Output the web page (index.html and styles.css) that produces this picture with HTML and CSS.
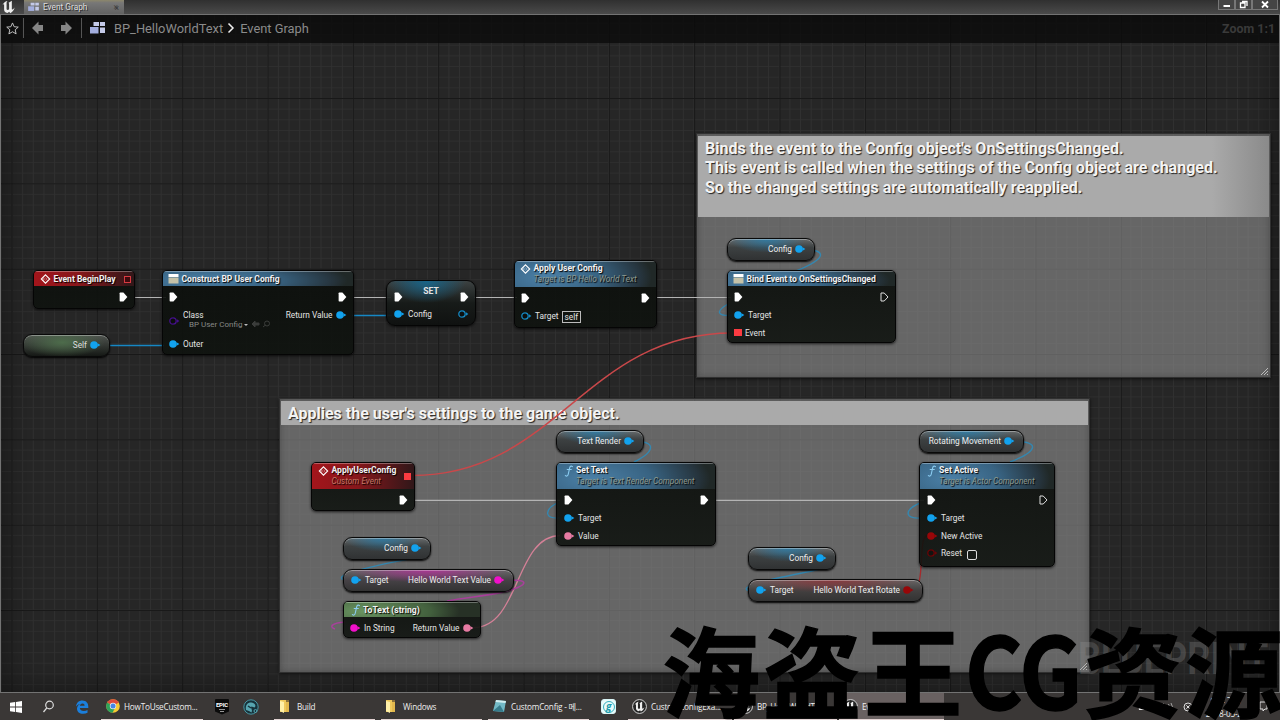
FILE: index.html
```html
<!DOCTYPE html>
<html lang="en">
<head>
  <meta charset="UTF-8">
  <meta name="viewport" content="width=device-width, initial-scale=1.0">
  <title>Event Graph</title>
  <link rel="stylesheet" href="styles.css">
</head>
<body>
  <!-- Shared pin shapes and icons -->
  <svg class="defs" width="0" height="0">
    <symbol id="exec" viewBox="0 0 9 10"><path d="M.6 1.2Q.6.5 1.3.5H4.4L8.4 5 4.4 9.5H1.3Q.6 9.5.6 8.8Z" fill="#fff"/></symbol>
    <symbol id="exec-off" viewBox="0 0 9 10"><path d="M1 1H4.2L8 5 4.2 9H1Z" fill="none" stroke="#ddd"/></symbol>
    <symbol id="dot" viewBox="0 0 11 8"><circle cx="4" cy="4" r="3.8" fill="currentColor"/><path d="M7.500 2.300 10.400 4 7.500 5.700Z" fill="currentColor"/></symbol>
    <symbol id="ring" viewBox="0 0 11 8"><circle cx="4" cy="4" r="3.2" fill="#0004" stroke="currentColor" stroke-width="1.3"/><path d="M8 2.3 10.4 4 8 5.7Z" fill="currentColor"/></symbol>
    <symbol id="event" viewBox="0 0 10 10"><path d="M5 .8 9.2 5 5 9.2.8 5Z" fill="none" stroke="#fff" stroke-width="1.1"/><path d="M3.2 3.6V6.4M3.2 5H5M5 3.5 6.6 5 5 6.5" fill="none" stroke="#fff" stroke-width=".6" opacity=".6"/></symbol>
    <symbol id="box" viewBox="0 0 11 10"><path d="M.5 0H10.5V3H.5Z" fill="#fff"/><path d="M.5 3.6H10.5V9.5H.5Z" fill="#c5c2a8"/></symbol>
    <symbol id="func" viewBox="0 0 9 12"><path d="M8 1.6C6.4.4 5.5 1.5 5.1 3.2L3.8 9C3.4 10.8 2.4 11.7.9 10.6M2.7 4.5H6.8" fill="none" stroke="currentColor" stroke-width="1.1" stroke-linecap="round"/></symbol>
    <symbol id="graph" viewBox="0 0 17 14"><path d="M4.500 1H10V5H4.500ZM11 1H16V5H11ZM11 6.500H16V12H11Z" fill="#c4cae8"/><path d="M1 6H9.500V12.500H1Z" fill="#a3aede"/></symbol>
    <symbol id="unreal" viewBox="0 0 16 16"><path d="M1 6C3 2.5 4.8 1.5 7 1.2 5.8 2 5.8 3 5.8 4V10.5C6.4 11.6 7.7 11.7 8.7 10.6V4.5C8.7 3.6 8.2 3.3 7.8 3.3L11.8.8V10.5C12.5 11.3 13.6 10.6 15 8.6 14.3 12 12.2 14 10 15L8.8 13.5 6.8 14.8C4 14 3 12.6 3 11V5.5C3 4.5 2.1 4.9 1 6Z" fill="#eee"/></symbol>
    <symbol id="folder" viewBox="0 0 12 14"><path d="M1 1H7V3H10V13H1Z" fill="#efc95c"/><path d="M1 2 5 3V14L1 12Z" fill="#fff0a8"/><path d="M7 1H10V13H7Z" fill="#d5a83d" opacity=".5"/></symbol>
    <symbol id="grip" viewBox="0 0 9 9"><path d="M1 8 8 1M4 8 8 4M7 8 8 7" stroke="#bbb" stroke-width="1"/></symbol>
  </svg>

  <header class="titlebar">
    <svg class="logo"><use href="#unreal"/></svg>
    <div class="tab">
      <svg class="tab-icon"><use href="#graph"/></svg>
      <span>Event Graph</span>
      <span class="tab-close">×</span>
    </div>
    <div class="window-buttons">
      <span><svg width="10" height="9"><path d="M1.500 6H8" stroke="#fff" stroke-width="2"/></svg></span>
      <span><svg width="10" height="9"><path d="M1.500 3H6V7.500H1.500ZM3 1.500H8V6" fill="none" stroke="#fff" stroke-width="1.300"/></svg></span>
      <span class="close"><svg width="10" height="9"><path d="M2 1.500 8 7.500M8 1.500 2 7.500" stroke="#fff" stroke-width="1.800"/></svg></span>
    </div>
  </header>

  <main class="graph">
    <nav class="breadcrumb">
      <svg class="star" viewBox="0 0 14 14"><path d="M7 1 8.800 5.100 13.200 5.500 9.900 8.400 10.900 12.800 7 10.500 3.100 12.800 4.100 8.400.8 5.500 5.200 5.100Z" fill="none" stroke="#ccc"/></svg>
      <i class="sep"></i>
      <svg class="arrow" viewBox="0 0 12 14"><path d="M0 7 6.500.5V4H11V10H6.500V13.500Z" fill="#858585"/></svg>
      <svg class="arrow" viewBox="0 0 12 14"><path d="M12 7 5.500.5V4H1V10H5.500V13.500Z" fill="#858585"/></svg>
      <i class="sep"></i>
      <svg class="crumb-icon"><use href="#graph"/></svg>
      <span>BP_HelloWorldText</span>
      <svg class="chevron" viewBox="0 0 8 12"><path d="M1.500 1.500 6 6 1.500 10.500" fill="none" stroke="#eee" stroke-width="1.500"/></svg>
      <span>Event Graph</span>
      <span class="zoom">Zoom 1:1</span>
    </nav>

    <section class="comment comment-bind">
      <h2>Binds the event to the Config object's OnSettingsChanged.<br>This event is called when the settings of the Config object are changed.<br>So the changed settings are automatically reapplied.</h2>
      <svg class="grip"><use href="#grip"/></svg>
    </section>
    <section class="comment comment-apply">
      <h2>Applies the user's settings to the game object.</h2>
      <svg class="grip"><use href="#grip"/></svg>
    </section>
    <div class="blueprint">BLUEPRINT</div>

    <!-- Wires, in window coordinates -->
    <svg class="wires" viewBox="0 0 1280 720">
      <g stroke="#b4b4b4" stroke-width="1.200">
        <path d="M134 297.500H166M353 297.500H391M474 297.500H517M656 297.500H731M414 500.300H560M715 500.300H924"/>
      </g>
      <g stroke="#1687c4" stroke-width="1.400">
        <path d="M104 345.500H164M352 315.500H392"/>
      </g>
      <g stroke="#3487b0" stroke-width="1.400">
        <path d="M805 249.500C826 250 828 258 796 271M728 304C716 311 716 316 732 315.500"/>
        <path d="M634 441.500C656 441 656 451 634 462M557 503C544 510 544 519 560 518"/>
        <path d="M1013 441.500C1040 441 1039 451 1010 462M920 503C904 510 904 519 921 518"/>
        <path d="M421 548C438 551 425 555 408 559 390 563 335 573 342 579L353 580"/>
        <path d="M826 559C842 561 829 567 812 571 794 575 740 584 747 590L758 591"/>
      </g>
      <path d="M412 475.500C557 475.500 585 333 732 333" stroke="#c9484a" stroke-width="1.500"/>
      <path d="M474 627.500C520 627 515 536 560 535.500" stroke="#d48097" stroke-width="1.300"/>
      <path d="M504 580C532 579 528 585 507 591 490 596 465 597 447 601M345 622C331 623 329 627 335 629" stroke="#a8409b" stroke-width="1.500"/>
      <path d="M911 591C927 591 917 538 927 535.500" stroke="#a62a2c" stroke-width="1.300"/>
    </svg>

    <article class="node begin-play">
      <header class="red"><svg class="icon"><use href="#event"/></svg><b>Event BeginPlay</b><i class="delegate hollow"></i></header>
      <div class="row"><span></span><svg class="exec"><use href="#exec"/></svg></div>
    </article>

    <article class="pill self green"><span>Self</span><svg class="pin blue"><use href="#dot"/></svg></article>

    <article class="node construct">
      <header class="blue-head"><svg class="icon"><use href="#box"/></svg><b>Construct BP User Config</b></header>
      <div class="row"><svg class="exec"><use href="#exec"/></svg><svg class="exec"><use href="#exec"/></svg></div>
      <div class="row class-row">
        <svg class="pin purple"><use href="#ring"/></svg>
        <div class="class-pick">
          <span>Class</span>
          <div class="picker"><span>BP User Config <i class="caret"></i></span>
            <svg width="20" height="8"><path d="M1 4 4 1V3H8V5H4V7ZM12 7 14.500 5" fill="#3b3d3b" stroke="#3b3d3b"/><circle cx="16" cy="3.500" r="2.500" fill="none" stroke="#3b3d3b"/></svg>
          </div>
        </div>
        <div class="out"><span>Return Value</span><svg class="pin blue"><use href="#dot"/></svg></div>
      </div>
      <div class="row"><div class="in"><svg class="pin blue"><use href="#dot"/></svg><span>Outer</span></div></div>
    </article>

    <article class="node set-node">
      <b>SET</b>
      <div class="row"><svg class="exec"><use href="#exec"/></svg><svg class="exec"><use href="#exec"/></svg></div>
      <div class="row"><div class="in"><svg class="pin blue"><use href="#dot"/></svg><span>Config</span></div><svg class="pin blue-dim"><use href="#ring"/></svg></div>
    </article>

    <article class="node apply">
      <header class="blue-head tall"><svg class="icon"><use href="#event"/></svg><div><b>Apply User Config</b><em>Target is BP Hello World Text</em></div></header>
      <div class="row"><svg class="exec"><use href="#exec"/></svg><svg class="exec"><use href="#exec"/></svg></div>
      <div class="row"><div class="in"><svg class="pin blue-dim"><use href="#ring"/></svg><span>Target</span><span class="self-box">self</span></div></div>
    </article>

    <article class="pill cfg-bind"><span>Config</span><svg class="pin blue"><use href="#dot"/></svg></article>
    <article class="node bind">
      <header class="blue-head"><svg class="icon"><use href="#box"/></svg><b>Bind Event to OnSettingsChanged</b></header>
      <div class="row"><svg class="exec"><use href="#exec"/></svg><svg class="exec"><use href="#exec-off"/></svg></div>
      <div class="row"><div class="in"><svg class="pin blue"><use href="#dot"/></svg><span>Target</span></div></div>
      <div class="row"><div class="in"><i class="delegate"></i><span>Event</span></div></div>
    </article>

    <article class="node custom-event">
      <header class="red tall"><svg class="icon"><use href="#event"/></svg><div><b>ApplyUserConfig</b><em>Custom Event</em></div><i class="delegate"></i></header>
      <div class="row"><span></span><svg class="exec"><use href="#exec"/></svg></div>
    </article>

    <article class="pill text-render"><span>Text Render</span><svg class="pin blue"><use href="#dot"/></svg></article>
    <article class="node set-text">
      <header class="blue-head tall"><svg class="icon func"><use href="#func"/></svg><div><b>Set Text</b><em>Target is Text Render Component</em></div></header>
      <div class="row"><svg class="exec"><use href="#exec"/></svg><svg class="exec"><use href="#exec"/></svg></div>
      <div class="row"><div class="in"><svg class="pin blue"><use href="#dot"/></svg><span>Target</span></div></div>
      <div class="row"><div class="in"><svg class="pin pink"><use href="#dot"/></svg><span>Value</span></div></div>
    </article>

    <article class="pill cfg-text"><span>Config</span><svg class="pin blue"><use href="#dot"/></svg></article>
    <article class="pill text-value magenta-head">
      <div class="in"><svg class="pin blue"><use href="#dot"/></svg><span>Target</span></div>
      <span>Hello World Text Value</span><svg class="pin magenta"><use href="#dot"/></svg>
    </article>
    <article class="node to-text">
      <header class="green-head"><svg class="icon func"><use href="#func"/></svg><b>ToText (string)</b></header>
      <div class="row"><div class="in"><svg class="pin magenta"><use href="#dot"/></svg><span>In String</span></div><div class="out"><span>Return Value</span><svg class="pin pink"><use href="#dot"/></svg></div></div>
    </article>

    <article class="pill cfg-rotate"><span>Config</span><svg class="pin blue"><use href="#dot"/></svg></article>
    <article class="pill text-rotate red-head">
      <div class="in"><svg class="pin blue"><use href="#dot"/></svg><span>Target</span></div>
      <span>Hello World Text Rotate</span><svg class="pin dark-red"><use href="#dot"/></svg>
    </article>

    <article class="pill rotating"><span>Rotating Movement</span><svg class="pin blue"><use href="#dot"/></svg></article>
    <article class="node set-active">
      <header class="blue-head tall"><svg class="icon func"><use href="#func"/></svg><div><b>Set Active</b><em>Target is Actor Component</em></div></header>
      <div class="row"><svg class="exec"><use href="#exec"/></svg><svg class="exec"><use href="#exec-off"/></svg></div>
      <div class="row"><div class="in"><svg class="pin blue"><use href="#dot"/></svg><span>Target</span></div></div>
      <div class="row"><div class="in"><svg class="pin dark-red"><use href="#dot"/></svg><span>New Active</span></div></div>
      <div class="row"><div class="in"><svg class="pin deep-red"><use href="#ring"/></svg><span>Reset</span><i class="check"></i></div></div>
    </article>
  </main>

  <footer class="taskbar">
    <div class="task start"><svg width="12" height="12"><path d="M0 1.800 5.200 1V5.600H0ZM6 .9 12 0V5.600H6ZM0 6.400H5.200V11L0 10.200ZM6 6.400H12V12L6 11.100Z" fill="#fff"/></svg></div>
    <div class="task search"><svg width="13" height="13"><circle cx="7.500" cy="5" r="3.800" fill="none" stroke="#ddd" stroke-width="1.200"/><path d="M4.800 7.800 1.500 12" stroke="#ddd" stroke-width="1.300"/></svg></div>
    <div class="task edge"><svg width="14" height="14"><path d="M1 6.500C1.500 2.500 4 .5 7.300.5 11.500.5 13.300 3.500 13.300 6.500V8H4.800C5 10 6.500 11 8.800 11 10.300 11 11.500 10.600 12.500 10V12.800C11.300 13.500 9.800 13.800 8 13.800 4.500 13.800 2 11.800 2 8.800 2 6.500 3.300 4.900 5.300 4 3.500 4 2.200 5 1 6.500ZM4.900 5.800H9.600C9.600 4.400 8.800 3.500 7.400 3.500 6 3.500 5.100 4.500 4.900 5.800Z" fill="#1b7fdc"/></svg></div>
    <div class="task open chrome"><svg width="14" height="14" viewBox="0 0 14 14"><circle cx="7" cy="7" r="6.800" fill="#f6c934"/><path d="M7 7 1.100 3.600A6.800 6.800 0 0 1 12.900 3.600Z" fill="#df4a3d"/><path d="M7 7 1.100 3.600A6.800 6.800 0 0 0 6.500 13.800L9.500 8Z" fill="#2fa35b"/><circle cx="7" cy="7" r="3.200" fill="#eee"/><circle cx="7" cy="7" r="2.500" fill="#4684e8"/></svg><span>HowToUseCustom...</span></div>
    <div class="task epic"><svg width="14" height="16"><path d="M0 1Q0 0 1 0H13Q14 0 14 1V12.500L7 15.500 0 12.500Z" fill="#0b0b0b"/><text x="7" y="8">EPIC</text><path d="M4 10.500H10M5 12.500H9" stroke="#bbb" stroke-width=".8"/></svg></div>
    <div class="task kraken"><svg width="16" height="16"><circle cx="8" cy="8" r="7.200" fill="#17333c" stroke="#4796a3"/><path d="M3 11C2 6 5 3 8.500 3.500 12 4 13.500 7 11.500 8.500L8.500 7.500C7 9 10 10 8.500 13.500L6 12Z" fill="#57a6b1"/><path d="M12 10C13 11 12.500 12 11.500 13M5 7 8 9" fill="none" stroke="#17333c" stroke-width="1.500"/><circle cx="12.500" cy="12" r="1.500" fill="none" stroke="#57a6b1"/></svg></div>
    <div class="task open build"><svg class="folder"><use href="#folder"/></svg><span>Build</span></div>
    <div class="task open windows"><svg class="folder"><use href="#folder"/></svg><span>Windows</span></div>
    <div class="task open notepad"><svg width="15" height="14"><path d="M4 1 14 2 12 13 1 12Z" fill="#72b9c6"/><path d="M4 1 14 2 13.500 4 3.500 3Z" fill="#d3eef0"/><path d="M1 12 8 6 12 13Z" fill="#367c8c"/></svg><span>CustomConfig - 메...</span></div>
    <div class="task git"><span class="g-tile"><span>g</span></span></div>
    <div class="task open ue-one"><svg class="ue-round" viewBox="0 0 16 16"><circle cx="8" cy="8" r="7.400" fill="#252525" stroke="#ddd"/><use href="#unreal" x="2" y="2" width="12" height="12"/></svg><span>CustomConfigExa...</span></div>
    <div class="task open ue-two"><svg class="ue-round" viewBox="0 0 16 16"><circle cx="8" cy="8" r="7.400" fill="#252525" stroke="#ddd"/><use href="#unreal" x="2" y="2" width="12" height="12"/></svg><span>BP_HelloWorldTe...</span></div>
    <div class="task open ue-three active"><svg class="ue-round" viewBox="0 0 16 16"><circle cx="8" cy="8" r="7.400" fill="#252525" stroke="#ddd"/><use href="#unreal" x="2" y="2" width="12" height="12"/></svg><span>Event Graph</span></div>
    <div class="tray">
      <svg width="12" height="9"><path d="M1 8Q0 5 3 5 4 1 7 3 9 2 10 5 12 5 11 8Z" fill="#eee"/></svg>
      <svg width="17" height="10"><path d="M1 3.500H3L6 1V9L3 6.500H1Z" fill="#ddd"/><path d="M8 3Q9.500 5 8 7M10.500 2Q12.500 5 10.500 8M13 1Q16 5 13 9" fill="none" stroke="#bbb" stroke-width=".8"/></svg>
      <svg width="10" height="10"><circle cx="5" cy="5" r="4" fill="none" stroke="#ddd"/><path d="M3.300 3.300 6.700 6.700M6.700 3.300 3.300 6.700" stroke="#ddd"/></svg>
      <div class="clock"><span>오후 2:27</span><span>2018-05-26</span></div>
      <svg width="9" height="11"><path d="M1 1H8V8H6L4 10V8H1Z" fill="none" stroke="#ddd"/></svg>
    </div>
  </footer>

  <div class="watermark"><span>海盗王</span><span class="latin">CG</span><span>资源</span></div>
</body>
</html>
```
FILE: styles.css
```css
* {
  box-sizing: border-box;
}

body {
  margin: 0;
  width: 1280px;
  height: 720px;
  overflow: hidden;
  display: flex;
  flex-direction: column;
  background: #262626;
  color: #e4e4e4;
  font-family: Roboto, "Noto Sans CJK SC", sans-serif;
  font-size: 8.3px;
}

svg {
  display: block;
  flex: none;
}

.defs {
  position: absolute;
}

/* Title bar */
.titlebar {
  height: 14px;
  flex: none;
  display: flex;
  align-items: flex-start;
  background: linear-gradient(#303030, #4a4a4a);
}

.logo {
  width: 15px;
  height: 14px;
  margin-left: 1px;
}

.tab {
  display: flex;
  align-items: center;
  width: 100px;
  height: 14px;
  margin-left: 8px;
  padding: 0 6px 1px 3px;
  background: linear-gradient(#8c876b, #777 20%, #626262);
  color: #ddd;
  text-shadow: 1px 1px #333;
}

.tab-icon {
  width: 13px;
  height: 10px;
  margin-right: 3px;
}

.tab-close {
  margin-left: auto;
  color: #444;
}

.window-buttons {
  display: flex;
  margin-left: auto;
  margin-right: 2px;
}

.window-buttons span {
  width: 17px;
  height: 10px;
  padding-left: 3px;
  border: 1px solid #777;
  border-top: 0;
  background: #454545;
}

.window-buttons .close {
  width: 26px;
  padding-left: 7px;
}

/* Graph canvas */
.graph {
  height: 679px;
  flex: none;
  border: 1px solid #737373;
  background-color: #262626;
  background-image:
    linear-gradient(90deg, #181818 1px, transparent 1px),
    linear-gradient(#181818 1px, transparent 1px),
    linear-gradient(90deg, #303030 1px, transparent 1px),
    linear-gradient(#2e2e2e 1px, transparent 1px);
  background-size: 85.333px 85.333px, 85.333px 85.333px, 10.667px 10.667px, 10.667px 10.667px;
  background-position: 10.500px 83px;
  box-shadow: inset 0 0 35px #0007;
}

.breadcrumb {
  display: flex;
  align-items: center;
  height: 28px;
  padding: 0 4px 2px 5px;
  background: rgba(10, 10, 10, .78);
  color: #8b8b8b;
  font-size: 12.850px;
}

.star {
  width: 13px;
  height: 13px;
}

.sep {
  width: 1px;
  height: 20px;
  margin: 0 8px 0 4px;
  background: #555;
}

.arrow {
  width: 12px;
  height: 14px;
  margin-right: 16px;
}

.arrow + .sep {
  margin: 0 7px 0 -7px;
}

.crumb-icon {
  width: 17px;
  height: 14px;
  margin-right: 8px;
}

.chevron {
  width: 8px;
  height: 12px;
  margin: 0 5px 0 4px;
}

.zoom {
  margin-left: auto;
  color: #3a3a3a;
  font-size: 12.4px;
  font-weight: bold;
}

/* Comment boxes */
.comment {
  position: absolute;
  padding: 2px 1px;
  border: 1px solid #303030;
  background: rgba(145, 145, 145, .6);
  box-shadow: 0 1px 3px #000a, inset 0 0 6px #3338;
}

.comment h2 {
  margin: 0;
  padding: 2.500px 7px;
  background: #aaa;
  color: #f4f4f4;
  font-size: 16px;
  line-height: 19.5px;
  white-space: nowrap;
  text-shadow: 1px 1px 1px #222;
}

.comment-bind {
  left: 696px;
  top: 133px;
  width: 575px;
  height: 245px;
}

.comment-bind h2 {
  height: 81px;
  background: linear-gradient(90deg, #aaa 90%, #8a8a8a);
}

.comment-apply {
  left: 279px;
  top: 398px;
  width: 811px;
  height: 275px;
}

.comment-apply h2 {
  height: 24px;
}

.grip {
  position: absolute;
  right: 1px;
  bottom: 1px;
  width: 9px;
  height: 9px;
}

.blueprint {
  position: absolute;
  left: 1078px;
  top: 632px;
  color: rgba(160, 160, 160, .25);
  font-size: 44px;
  font-weight: bold;
  line-height: 54px;
  transform: scaleX(.82);
  transform-origin: left;
}

.wires {
  position: absolute;
  left: 0;
  top: 0;
  width: 1280px;
  height: 720px;
  fill: none;
}

/* Nodes */
.node {
  position: absolute;
  border: 1px solid #050505;
  border-radius: 5px;
  background: linear-gradient(rgba(12, 15, 12, .93), rgba(14, 18, 14, .88));
  box-shadow: 0 1px 3px #000b;
  overflow: hidden;
  white-space: nowrap;
}

.node b {
  font-size: 8.550px;
}

.node header {
  display: flex;
  align-items: center;
  height: 15px;
  margin-bottom: 2px;
  padding: 0 3px 0 5px;
  border-top: 1px solid #ffffff50;
  color: #f2f2f2;
  text-shadow: 1px 1px 1px #000;
}

.node header.tall {
  height: 26px;
  align-items: flex-start;
  padding-top: 1px;
}

.tall b,
.tall em {
  display: block;
  line-height: 11px;
}

.tall em {
  color: #8e9a8e;
  font-size: 8.250px;
}

.icon {
  width: 11px;
  height: 10px;
  margin-right: 2.500px;
}

.tall .icon {
  margin-top: 1px;
}

.icon.func {
  width: 10px;
  height: 12px;
  margin: 0 2px 0 2px;
  color: #8bcdf2;
}

.red {
  background: linear-gradient(90deg, #a3151b, #86171b 45%, #301719);
}

.red em {
  color: #c77966;
}

.blue-head {
  background: radial-gradient(ellipse 75% 180% at 22% 60%, #4b80a7, #386382 50%, #26343d 90%, #202827);
}

.green-head {
  background: radial-gradient(ellipse 70% 180% at 15% 60%, #6a9561, #425f3d 70%, #273126);
}

.row {
  display: flex;
  align-items: center;
  justify-content: space-between;
  height: 17.6px;
  padding: 0 6.500px 0 6px;
}

/* First row holds the exec pins and sits a bit apart */
.node header + .row:not(:last-child) {
  margin-bottom: .8px;
}

.in,
.out {
  display: flex;
  align-items: center;
  gap: 3px;
}

.exec {
  width: 9px;
  height: 10px;
}

.pin {
  width: 11px;
  height: 8px;
}

.blue { color: #12a2ee; }
.blue-dim { color: #1588c2; }
.purple { color: #44108a; }
.pink { color: #e77ba3; }
.magenta { color: #f110ca; }
.dark-red { color: #980608; }
.deep-red { color: #690406; }

.delegate {
  width: 8px;
  height: 7px;
  background: #fb3b41;
}

header .delegate {
  width: 7px;
  margin-left: auto;
}

.tall .delegate {
  margin-top: 8px;
}

.delegate.hollow {
  background: #3f0a0e;
  border: 1px solid #d83a41;
}

.begin-play { left: 33px; top: 270px; width: 102px; height: 39px; }
.construct { left: 162px; top: 270px; width: 192px; height: 85px; }
.apply { left: 514px; top: 260px; width: 143px; height: 68px; }
.bind { left: 727px; top: 270px; width: 169px; height: 73px; }
.custom-event { left: 311px; top: 462px; width: 104px; height: 49px; }
.set-text { left: 556px; top: 462px; width: 160px; height: 84px; }
.set-active { left: 919px; top: 462px; width: 136px; height: 105px; }
.to-text { left: 343px; top: 601px; width: 138px; height: 37px; }

.begin-play header,
.custom-event header {
  padding-left: 6px;
}

.set-text .row,
.set-active .row {
  padding-left: 7px;
}

.set-node {
  left: 386px;
  top: 280px;
  width: 90px;
  height: 46px;
  padding-top: 5px;
  border-radius: 9px;
  background: radial-gradient(ellipse 45% 50% at 45% 0, #17658a, transparent), linear-gradient(#3e4444ee, #161a18ee 50%, #0e100fee);
  text-align: center;
}

.set-node .row {
  padding-left: 7px;
}

.set-node b {
  display: block;
  height: 2px;
  line-height: 11px;
}

.class-row {
  height: 29px;
  align-items: flex-start;
}

.class-row > .pin {
  margin-top: 11px;
}

.class-pick {
  margin: 4px auto 0 3px;
}

.class-row .out {
  margin-top: 4px;
}

.picker {
  display: flex;
  gap: 3px;
  padding-left: 6px;
  color: #878987;
  font-size: 8px;
}

.caret {
  display: inline-block;
  border: 2.500px solid transparent;
  border-top-color: #bbb;
  border-bottom: 0;
  vertical-align: 1px;
}

.self-box {
  margin-top: 2px;
  padding: 0 2px;
  border: 1px solid #bbb;
  line-height: 10px;
}

.check {
  width: 10px;
  height: 10px;
  margin: 3px 0 0 2px;
  border: 1.500px solid #ddd;
  border-radius: 2px;
}

/* Variable pills */
.pill {
  position: absolute;
  display: flex;
  align-items: center;
  justify-content: flex-end;
  gap: 3px;
  height: 23px;
  padding: 0 8px 1px 7px;
  border: 1px solid #090909;
  border-radius: 9px;
  background:
    radial-gradient(ellipse 45% 65% at 45% 0, #257eaecc, transparent),
    linear-gradient(#676a6b, #3d4142 40%, #303233);
  box-shadow: 0 1px 2px #000, inset 0 1px #ffffff55;
  color: #eee;
  white-space: nowrap;
}

.pill .in {
  margin-right: auto;
}

.pill.green {
  color: #ddd;
  background: radial-gradient(ellipse 50% 70% at 45% 35%, #4d6c4b, transparent), linear-gradient(#505450, #272b27 70%, #151815);
}

.pill.magenta-head {
  background: radial-gradient(ellipse 48% 60% at 50% 0, #ba299ecc, transparent), linear-gradient(#686868, #454145 50%, #333);
}

.pill.red-head {
  background: radial-gradient(ellipse 50% 60% at 48% 0, #8c3035dd, transparent), linear-gradient(#676666, #434040 50%, #333);
}

.self { left: 23px; top: 334px; width: 87px; }
.cfg-bind { left: 727px; top: 238px; width: 88px; }
.text-render { left: 556px; top: 430px; width: 88px; }
.rotating { left: 919px; top: 430px; width: 105px; }
.cfg-text { left: 343px; top: 537px; width: 88px; }
.text-value { left: 343px; top: 569px; width: 171px; }
.cfg-rotate { left: 748px; top: 547px; width: 88px; }
.text-rotate { left: 748px; top: 579px; width: 175px; }

/* Taskbar */
.taskbar {
  display: flex;
  flex: 1;
  background: #3a3736;
  color: #eee;
  font-family: "Open Sans", "Noto Sans CJK KR", sans-serif;
  font-size: 8.2px;
  letter-spacing: -.22px;
}

.task {
  display: flex;
  align-items: center;
  gap: 4px;
  width: 101px;
  margin-right: 6px;
  padding-left: 4px;
  white-space: nowrap;
}

.task.open {
  border-bottom: 1.500px solid #e3d4d4;
}

.task.start { width: 37px; margin: 0; padding-left: 10px; }
.task.search { width: 34px; margin: 0; padding-left: 5px; }
.task.edge { width: 30px; margin: 0; }
.task.chrome { width: 102px; margin-right: 7px; padding-left: 5px; }
.task.epic { width: 29px; margin: 0; padding-left: 5px; }
.task.kraken { width: 35px; margin: 0; }
.task.build { padding-left: 5px; }
.task.git { width: 33px; margin: 0; padding-left: 6px; }
.task.ue-one { width: 104px; margin-right: 2px; }
.task.ue-two { width: 103px; margin-right: 2px; }
.task.active { width: 105px; background: #696161; }

.epic text {
  fill: #fff;
  font: bold 6px Roboto, sans-serif;
  text-anchor: middle;
}

.folder {
  width: 12px;
  height: 14px;
  margin-right: 2px;
}

.g-tile {
  display: flex;
  align-items: center;
  justify-content: center;
  width: 15px;
  height: 15px;
  border: 1px solid #d9f5f7;
  border-radius: 3px;
  background: #e9fafa;
}

.g-tile span {
  width: 12px;
  height: 12px;
  border: 1px solid #35afbd;
  border-radius: 50%;
  color: #209cab;
  font: italic bold 10px/8px "Open Sans", sans-serif;
  text-align: center;
}

.ue-round {
  width: 15px;
  height: 15px;
}

.tray {
  display: flex;
  align-items: center;
  gap: 8px;
  margin-left: auto;
  margin-right: 12px;
}

.clock {
  display: flex;
  flex-direction: column;
  align-items: center;
  width: 50px;
  line-height: 13px;
}

/* Overlay caption */
.watermark {
  position: absolute;
  left: 662px;
  top: 594px;
  display: flex;
  color: #000;
  font: bold 98px/146px "Noto Sans CJK SC", sans-serif;
  letter-spacing: 3px;
  white-space: nowrap;
  -webkit-text-stroke: 1.500px #000;
}

.watermark .latin {
  width: 119px;
  font-size: 100px;
  letter-spacing: 0;
  transform: scaleX(.88);
  transform-origin: left;
}
```
